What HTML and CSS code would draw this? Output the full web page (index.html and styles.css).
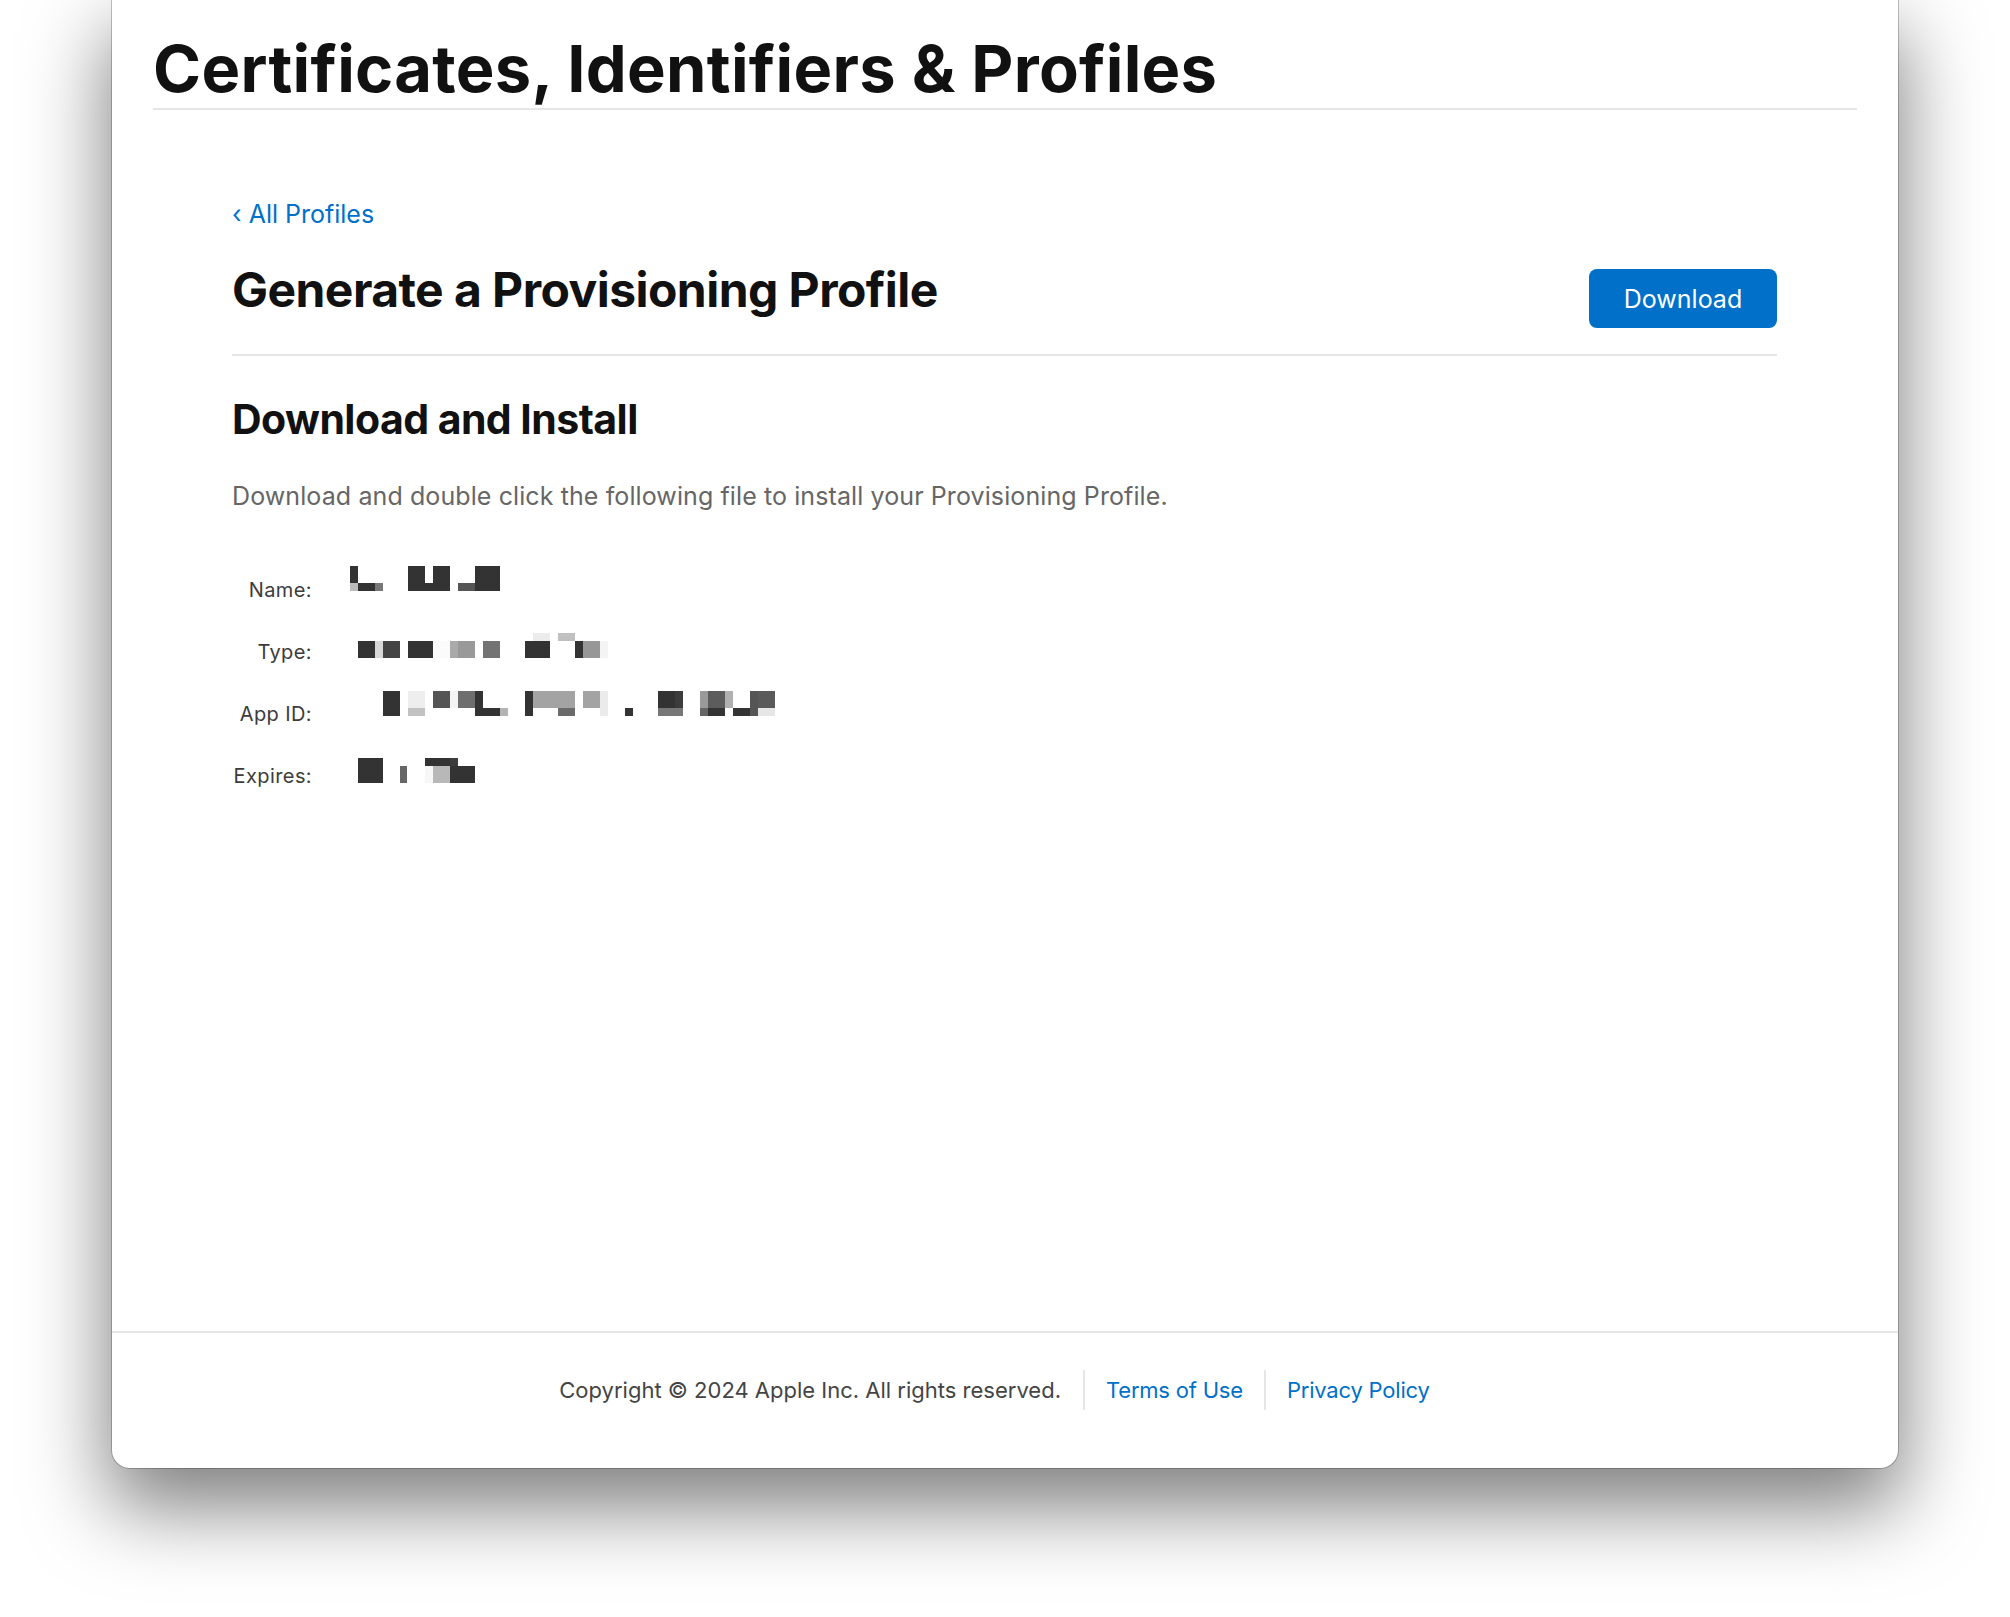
FILE: index.html
```html
<!DOCTYPE html>
<html lang="en">
<head>
<meta charset="utf-8">
<title>Certificates, Identifiers &amp; Profiles</title>
<link rel="stylesheet" href="styles.css">
</head>
<body>
<div class="window">
  <header class="page-header">
    <h1 class="page-title">Certificates, Identifiers &amp; Profiles</h1>
  </header>
  <main class="content">
    <a class="back-link" href="#">&lsaquo; All Profiles</a>
    <div class="title-row">
      <h2 class="section-title">Generate a Provisioning Profile</h2>
      <button class="btn-primary" type="button">Download</button>
    </div>
    <section class="install">
      <h3 class="install-title">Download and Install</h3>
      <p class="install-desc">Download and double click the following file to install your Provisioning Profile.</p>
      <dl class="details">
        <div class="detail-row">
          <dt class="detail-label">Name:</dt>
          <dd class="detail-value">
            <svg class="mosaic" width="160" height="40" viewBox="0 0 160 40">
              <rect x="0" y="2" width="8" height="17" fill="#333"/>
              <rect x="0" y="19" width="8" height="8" fill="#bbb"/>
              <rect x="8" y="19" width="17" height="8" fill="#333"/>
              <rect x="25" y="19" width="8" height="8" fill="#777"/>
              <rect x="58" y="2" width="17" height="25" fill="#333"/>
              <rect x="75" y="19" width="8" height="8" fill="#333"/>
              <rect x="83" y="2" width="17" height="25" fill="#333"/>
              <rect x="108" y="19" width="17" height="8" fill="#555"/>
              <rect x="125" y="2" width="25" height="25" fill="#333"/>
            </svg>
          </dd>
        </div>
        <div class="detail-row">
          <dt class="detail-label">Type:</dt>
          <dd class="detail-value">
            <svg class="mosaic" width="260" height="40" viewBox="0 0 260 40">
              <rect x="8" y="15" width="17" height="17" fill="#333"/>
              <rect x="25" y="15" width="8" height="17" fill="#d8d8d8"/>
              <rect x="33" y="15" width="17" height="17" fill="#444"/>
              <rect x="58" y="15" width="25" height="17" fill="#333"/>
              <rect x="83" y="15" width="17" height="17" fill="#fbfbfb"/>
              <rect x="100" y="15" width="8" height="17" fill="#aaa"/>
              <rect x="108" y="15" width="17" height="17" fill="#999"/>
              <rect x="133" y="15" width="17" height="17" fill="#737373"/>
              <rect x="175" y="15" width="8" height="17" fill="#333"/>
              <rect x="183" y="7" width="17" height="8" fill="#ececec"/>
              <rect x="183" y="15" width="17" height="17" fill="#333"/>
              <rect x="208" y="7" width="17" height="8" fill="#c0c0c0"/>
              <rect x="225" y="15" width="8" height="17" fill="#333"/>
              <rect x="233" y="15" width="17" height="17" fill="#979797"/>
              <rect x="250" y="15" width="8" height="17" fill="#f4f4f4"/>
            </svg>
          </dd>
        </div>
        <div class="detail-row">
          <dt class="detail-label">App ID:</dt>
          <dd class="detail-value">
            <svg class="mosaic" width="440" height="40" viewBox="0 0 440 40">
              <rect x="33" y="3" width="17" height="25" fill="#333"/>
              <rect x="58" y="3" width="17" height="17" fill="#eee"/>
              <rect x="58" y="20" width="17" height="8" fill="#c2c2c2"/>
              <rect x="83" y="3" width="17" height="17" fill="#555"/>
              <rect x="100" y="3" width="8" height="17" fill="#f4f4f4"/>
              <rect x="108" y="3" width="17" height="17" fill="#6e6e6e"/>
              <rect x="125" y="3" width="8" height="25" fill="#333"/>
              <rect x="133" y="20" width="17" height="8" fill="#333"/>
              <rect x="150" y="20" width="8" height="8" fill="#b3b3b3"/>
              <rect x="175" y="3" width="8" height="25" fill="#333"/>
              <rect x="183" y="3" width="42" height="17" fill="#a3a3a3"/>
              <rect x="208" y="20" width="17" height="8" fill="#6a6a6a"/>
              <rect x="233" y="3" width="17" height="17" fill="#a3a3a3"/>
              <rect x="250" y="3" width="8" height="25" fill="#ebebeb"/>
              <rect x="275" y="20" width="8" height="8" fill="#333"/>
              <rect x="308" y="3" width="17" height="17" fill="#333"/>
              <rect x="325" y="3" width="8" height="17" fill="#3c3c3c"/>
              <rect x="308" y="20" width="25" height="8" fill="#777"/>
              <rect x="350" y="3" width="8" height="17" fill="#9a9a9a"/>
              <rect x="350" y="20" width="8" height="8" fill="#666"/>
              <rect x="358" y="3" width="17" height="17" fill="#5c5c5c"/>
              <rect x="358" y="20" width="17" height="8" fill="#333"/>
              <rect x="375" y="3" width="8" height="17" fill="#b0b0b0"/>
              <rect x="383" y="20" width="17" height="8" fill="#333"/>
              <rect x="400" y="3" width="8" height="25" fill="#555"/>
              <rect x="408" y="3" width="17" height="17" fill="#5a5a5a"/>
              <rect x="408" y="20" width="17" height="8" fill="#e6e6e6"/>
            </svg>
          </dd>
        </div>
        <div class="detail-row">
          <dt class="detail-label">Expires:</dt>
          <dd class="detail-value">
            <svg class="mosaic" width="140" height="40" viewBox="0 0 140 40">
              <rect x="8" y="8" width="25" height="25" fill="#333"/>
              <rect x="50" y="16" width="7" height="17" fill="#666"/>
              <rect x="75" y="16" width="8" height="17" fill="#f7f7f7"/>
              <rect x="75" y="8" width="25" height="8" fill="#333"/>
              <rect x="100" y="8" width="8" height="8" fill="#3d3d3d"/>
              <rect x="83" y="16" width="17" height="17" fill="#b8b8b8"/>
              <rect x="100" y="16" width="25" height="17" fill="#333"/>
            </svg>
          </dd>
        </div>
      </dl>
    </section>
  </main>
  <footer class="page-footer">
    <span class="footer-copy">Copyright &copy; 2024 Apple Inc. All rights reserved.</span>
    <a class="footer-link" href="#">Terms of Use</a>
    <a class="footer-link" href="#">Privacy Policy</a>
  </footer>
</div>
</body>
</html>
```
FILE: styles.css
```css
* { box-sizing: border-box; }

html, body {
  margin: 0;
  padding: 0;
  background: #ffffff;
}

body {
  font-family: Inter, "Noto Sans", "Liberation Sans", sans-serif;
  color: #111111;
  height: 1617px;
  overflow: hidden;
}

.window {
  margin-left: 112px;
  width: 1786px;
  height: 1468px;
  background: #ffffff;
  border-radius: 0 0 18px 18px;
  box-shadow: 0 0 0 1px rgba(0, 0, 0, 0.22), 0 36px 80px 4px rgba(0, 0, 0, 0.5);
  display: flex;
  flex-direction: column;
}

.page-header {
  padding: 30px 41px 0 41px;
}

.page-title {
  margin: 0;
  font-size: 65px;
  line-height: 78px;
  font-weight: 700;
  letter-spacing: 0.3px;
  color: #111111;
  border-bottom: 2px solid #e6e6e6;
}

.content {
  flex: 1;
  padding: 89px 121px 0 120px;
}

.back-link {
  display: inline-block;
  font-size: 25px;
  line-height: 30px;
  color: #0070c9;
  text-decoration: none;
}

.title-row {
  display: flex;
  justify-content: space-between;
  align-items: flex-start;
  margin-top: 31px;
  padding-bottom: 26px;
  border-bottom: 2px solid #e6e6e6;
}

.section-title {
  margin: 0;
  font-size: 48px;
  line-height: 60px;
  font-weight: 700;
  letter-spacing: -0.55px;
  color: #111111;
}

.btn-primary {
  margin-top: 9px;
  height: 59px;
  width: 188px;
  border: 0;
  border-radius: 8px;
  background: #0070c9;
  color: #ffffff;
  font-family: inherit;
  font-size: 25px;
  font-weight: 400;
  cursor: pointer;
}

.install-title {
  margin: 38px 0 0 0;
  font-size: 41px;
  line-height: 50px;
  font-weight: 700;
  letter-spacing: -0.55px;
  color: #111111;
}

.install-desc {
  margin: 34px 0 0 0;
  font-size: 25px;
  line-height: 36px;
  letter-spacing: 0.1px;
  color: #666666;
}

.details {
  margin: 50px 0 0 0;
}

.detail-row {
  display: flex;
  height: 62px;
}

.detail-label {
  width: 80px;
  text-align: right;
  padding-top: 14px;
  font-size: 20px;
  line-height: 24px;
  letter-spacing: 0.4px;
  color: #3c3c3c;
  white-space: nowrap;
}

.detail-value {
  margin: 0 0 0 38px;
}

.mosaic {
  display: block;
}

.page-footer {
  flex: none;
  border-top: 2px solid #e6e6e6;
  padding: 37px 0 58px 0;
  display: flex;
  justify-content: center;
  align-items: stretch;
}

.footer-copy {
  font-size: 22px;
  line-height: 40px;
  color: #444444;
  padding-right: 22px;
}

.footer-link {
  font-size: 22px;
  line-height: 40px;
  letter-spacing: -0.2px;
  color: #0070c9;
  text-decoration: none;
  padding: 0 21px;
  border-left: 2px solid #e6e6e6;
}
```
